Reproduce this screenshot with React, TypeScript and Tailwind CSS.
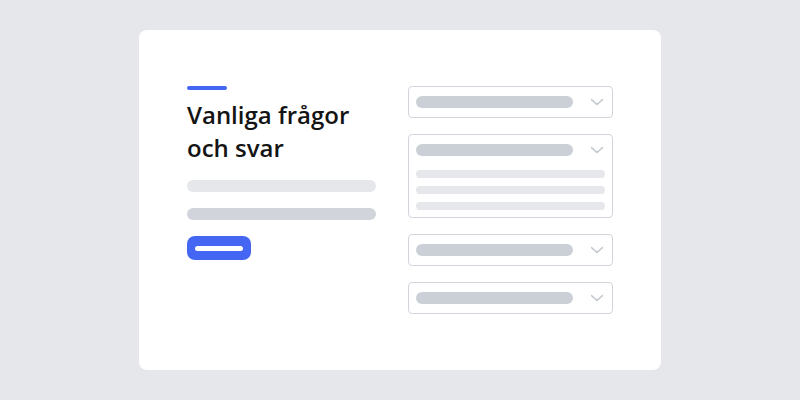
function Chevron() {
  return (
    <svg viewBox="0 0 12 12" className="ml-auto mr-[2px] h-3 w-3" fill="none">
      <path d="M0.5 3.5 L6 8.5 L11.5 3.5" stroke="#c4c8cf" strokeWidth="1.6" strokeLinecap="round" strokeLinejoin="round" />
    </svg>
  );
}

function FaqRow({ open = false }: { open?: boolean }) {
  return (
    <div className={`rounded-[4px] border border-[#d1d5db] bg-white px-[7px] pt-[9px] ${open ? "pb-[7px]" : "pb-[9px]"}`}>
      <div className="flex items-center">
        <div className="h-3 w-[157px] rounded-full bg-[#cbd0d7]" />
        <Chevron />
      </div>
      {open && (
        <div className="mt-[14px] flex flex-col gap-2">
          <div className="h-2 w-[189px] rounded-full bg-[#e5e7eb]" />
          <div className="h-2 w-[189px] rounded-full bg-[#e5e7eb]" />
          <div className="h-2 w-[189px] rounded-full bg-[#e5e7eb]" />
        </div>
      )}
    </div>
  );
}

export default function App() {
  return (
    <div className="flex h-[400px] w-[800px] items-center justify-center bg-[#e5e7eb]">
      <div className="flex h-[340px] w-[522px] gap-8 rounded-lg bg-white px-12 pt-14">
        {/* Left column */}
        <div className="flex w-[189px] flex-col">
          <div className="h-1 w-10 rounded-full bg-[#4466f2]" />
          <h1
            className="mt-2 text-[24px] font-semibold leading-[33px] text-[#141414]"
            style={{ fontFamily: '"Open Sans", sans-serif' }}
          >
            Vanliga frågor
            <br />
            och svar
          </h1>
          <div className="mt-4 h-3 w-full rounded-full bg-[#e5e7eb]" />
          <div className="mt-4 h-3 w-full rounded-full bg-[#d1d5db]" />
          <div className="mt-4 flex h-6 w-16 items-center justify-center rounded-lg bg-[#4466f2]">
            <div className="h-[5px] w-12 rounded-full bg-white" />
          </div>
        </div>

        {/* Right column */}
        <div className="flex w-[205px] flex-col gap-4">
          <FaqRow />
          <FaqRow open />
          <FaqRow />
          <FaqRow />
        </div>
      </div>
    </div>
  );
}
